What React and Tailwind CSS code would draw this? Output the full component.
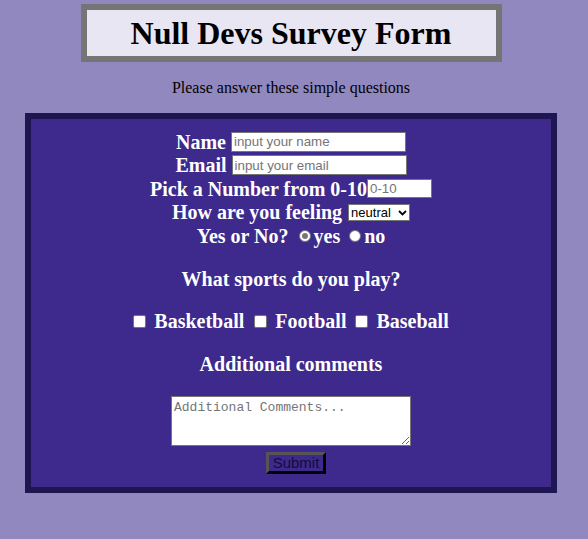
import React from 'react';

function Radio({ checked }) {
  return (
    <span className="inline-flex items-center justify-center w-[12px] h-[12px] rounded-full border border-[#767676] bg-white mr-[3px]">
      {checked && <span className="w-[6px] h-[6px] rounded-full bg-[#767676]" />}
    </span>
  );
}

function Checkbox() {
  return <span className="inline-block w-[13px] h-[13px] rounded-[2px] border border-[#767676] bg-white mr-[8px]" />;
}

const fieldCls =
  "bg-white border border-[#767676] px-[2px] text-[13.33px] font-['Liberation_Sans',sans-serif] font-normal text-black placeholder:text-[#757575] outline-none";

export default function App() {
  return (
    <div className="min-h-[539px] bg-[#9188bf] font-['Liberation_Serif',serif] text-black">
      <div className="w-[582px] pt-[4px] flex flex-col items-center">
        {/* Header */}
        <div className="w-[421px] h-[58px] border-[6px] border-[#757575] bg-[#e8e6f3] flex items-center justify-center">
          <h1 className="text-[32px] font-bold leading-none">Null Devs Survey Form</h1>
        </div>

        <p className="mt-[17px] text-[16px] leading-[18px]">Please answer these simple questions</p>

        {/* Form */}
        <form className="mt-[16px] w-[532px] border-[6px] border-[#1e1650] bg-[#3d2a8c] text-white pt-[11px] pb-[13px] flex flex-col items-center">
          <div className="h-[23.5px] flex items-center text-[20px] font-bold">
            <span>Name</span>
            <input className={`ml-[5px] w-[175px] h-[20px] ${fieldCls}`} placeholder="input your name" />
          </div>
          <div className="h-[23.5px] flex items-center text-[20px] font-bold">
            <span>Email</span>
            <input className={`ml-[5px] w-[175px] h-[20px] ${fieldCls}`} placeholder="input your email" />
          </div>
          <div className="h-[23.5px] flex items-center text-[20px] font-bold">
            <span>Pick a Number from 0-10</span>
            <input className={`w-[65px] h-[19px] ${fieldCls}`} placeholder="0-10" />
          </div>
          <div className="h-[23.5px] flex items-center text-[20px] font-bold">
            <span>How are you feeling</span>
            <span className="ml-[6px] w-[62px] h-[17px] bg-white border border-[#767676] flex items-center justify-between pl-[2px] pr-[2px] text-[13px] font-['Liberation_Sans',sans-serif] font-normal text-black">
              neutral
              <svg width="9" height="6" viewBox="0 0 9 6" className="mt-[1px]">
                <path d="M1 1l3.5 3.5L8 1" fill="none" stroke="black" strokeWidth="1.8" />
              </svg>
            </span>
          </div>
          <div className="h-[23.5px] flex items-center text-[20px] font-bold">
            <span className="mr-[10px]">Yes or No?</span>
            <Radio checked />
            <span className="mr-[9px]">yes</span>
            <Radio />
            <span>no</span>
          </div>

          <h3 className="mt-[20px] text-[20px] font-bold leading-[23px]">What sports do you play?</h3>

          <div className="mt-[19px] h-[23px] flex items-center text-[20px] font-bold">
            <Checkbox />
            <span className="mr-[10px]">Basketball</span>
            <Checkbox />
            <span className="mr-[9px]">Football</span>
            <Checkbox />
            <span>Baseball</span>
          </div>

          <h3 className="mt-[20px] text-[20px] font-bold leading-[23px]">Additional comments</h3>

          <textarea
            className="mt-[20px] w-[240px] h-[50px] bg-white border border-[#767676] px-[2px] py-[1px] text-[13px] font-['Liberation_Mono',monospace] text-black placeholder:text-[#757575] outline-none"
            placeholder="Additional Comments..."
          />

          <button
            type="button"
            className="mt-[6px] ml-[10px] w-[60px] h-[22px] bg-[#3d2a8c] border-[3px] border-t-[#555555] border-l-[#555555] border-r-black border-b-black text-[15px] leading-none font-['Liberation_Sans',sans-serif] text-[#140a3c]"
          >
            Submit
          </button>
        </form>
      </div>
    </div>
  );
}
